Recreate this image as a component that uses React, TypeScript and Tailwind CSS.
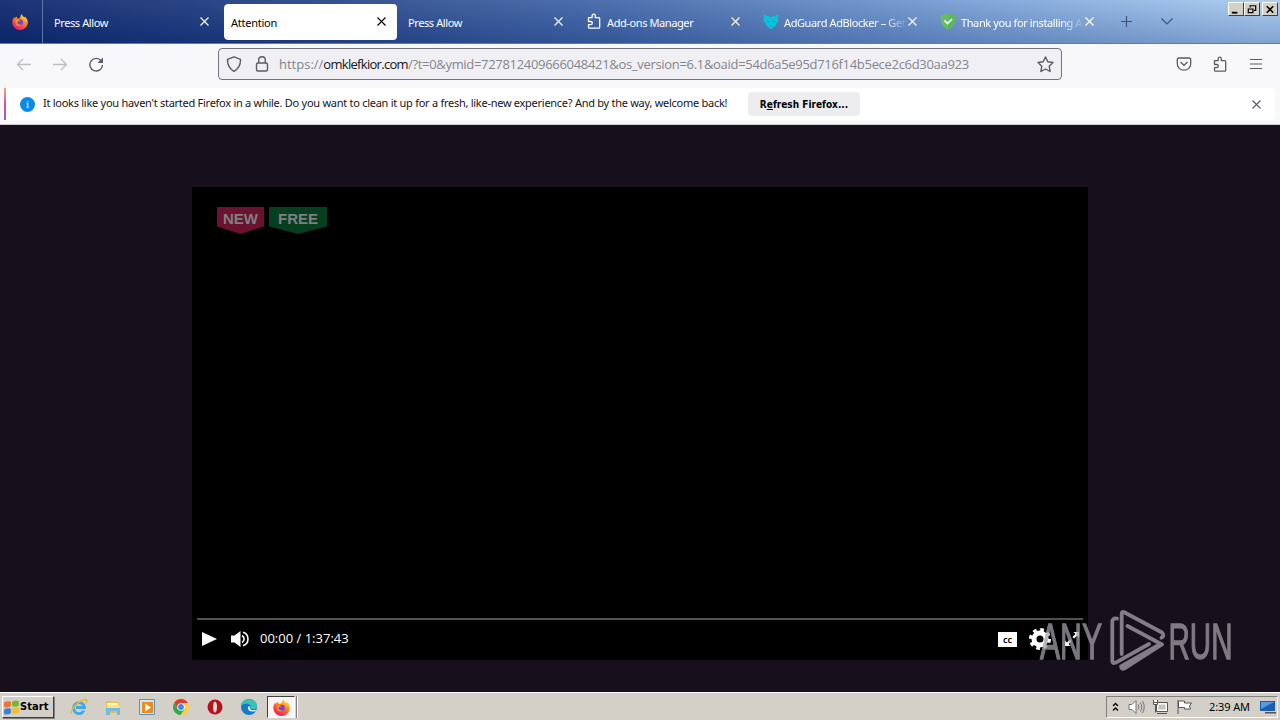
import type { ReactNode } from 'react'

const tabs = [
  { title: 'Press Allow', icon: null, active: false },
  { title: 'Attention', icon: null, active: true },
  { title: 'Press Allow', icon: null, active: false },
  { title: 'Add-ons Manager', icon: 'puzzle', active: false },
  { title: 'AdGuard AdBlocker – Get', icon: 'adguard', active: false },
  { title: 'Thank you for installing A', icon: 'shield', active: false },
]

function Puzzle({ className }: { className?: string }) {
  return (
    <svg className={className} width="16" height="16" viewBox="0 0 16 16" fill="none" stroke="currentColor" strokeWidth="1.3" strokeLinejoin="round">
      <path d="M2.500 4.700h3.600V3a1.600 1.800 0 0 1 3.200 0v1.700h3.400a1 1 0 0 1 1 1v8.600a.9.900 0 0 1-.9.900H3.500a1 1 0 0 1-1-1v-2.500h2.200a1.500 1.500 0 0 0 0-3.200H2.500z" />
    </svg>
  )
}

function Close({ className }: { className?: string }) {
  return (
    <svg className={className} width="9" height="9" viewBox="0 0 9 9" stroke="currentColor" strokeWidth="1.1">
      <path d="M.5.5l8 8M8.5.5l-8 8" />
    </svg>
  )
}

function FirefoxLogo({ size }: { size: number }) {
  return (
    <svg width={size} height={size} viewBox="0 0 16 16">
      <defs>
        <linearGradient id="fx" x1="0.8" y1="0" x2="0.2" y2="1">
          <stop offset="0" stopColor="#fff04a" />
          <stop offset="0.4" stopColor="#ff8a1e" />
          <stop offset="0.75" stopColor="#ff3750" />
          <stop offset="1" stopColor="#e31587" />
        </linearGradient>
      </defs>
      <path d="M10 0c.2 2 1.3 2.5 2.3 3.6.5-.1.5-.7.5-1C15 4.500 15.800 6.400 15.800 8.500A7.700 7.500 0 0 1 .3 8.500C.3 6 1.200 4.200 2.300 3c0 .6.1 1.200.3 1.600C3.200 3.700 4 3 5 2.600c-.1.700 0 1.500.4 2.100C7 4.600 8 4.300 8.200 3.600 8.500 2.200 9 .800 10 0z" fill="url(#fx)" />
      <circle cx="8.100" cy="8.300" r="3" fill="#7542e5" />
      <path d="M3.500 6.500c1.500-1 3.500-.8 4.600.3-1.700.1-2.100 1-3 1.300 0 2.400 2.600 3.400 4.300 2.300-1.100 1.900-5 1.700-5.900-1z" fill="#ff9a28" />
    </svg>
  )
}

function TabIcon({ name }: { name: string }) {
  if (name === 'puzzle') return <Puzzle className="-mt-0.5 text-white" />
  if (name === 'adguard')
    return (
      <svg width="16" height="16" viewBox="0 0 16 16" fill="#08c4d8">
        <path d="M.5 1L2.500.500 4 2.500 5.500 1.500 6.500 3h3l1-1.500L12 2.500 13.500.500l2 .5-.5 3 .5 3.500L13.500 9l-1 3-2 1-2.500 2.500L5.500 13l-2-1-1-3L.5 7.500 1 4z" />
        <path d="M4 7l2 1M12 7l-2 1M7 12h2" stroke="#2a8fc5" />
      </svg>
    )
  return (
    <svg width="16" height="16" viewBox="0 0 16 16">
      <path d="M8 0c2.500.1 5 .6 7.500 1.600 0 6-.8 10.400-7.500 14.200C1.300 12 .5 7.600.5 1.600 3 .6 5.500.1 8 0z" fill="#68bd63" />
      <path d="M8 0c2.500.1 5 .6 7.500 1.600 0 6-.8 10.400-7.500 14.200z" fill="#5cb85c" />
      <path d="M4.500 6.500l3 3L12 5" fill="none" stroke="#fff" strokeWidth="1.700" />
    </svg>
  )
}

function TabStrip() {
  return (
    <div className="flex h-11 border-b border-[#66799f] bg-[linear-gradient(to_bottom,rgba(255,255,255,0.08),rgba(10,36,106,0.24)),linear-gradient(99deg,#0a246a_0%,#213f82_22%,#4166a8_48%,#7098d0_72%,#a6caf0_98%)]">
      <div className="flex w-[43px] shrink-0 items-center justify-center border-r border-[#5c74a8] pr-0.5">
        <FirefoxLogo size={16} />
      </div>
      <div className="flex pl-1 pt-1">
        {tabs.map((tab, i) => (
          <div
            key={i}
            className={`flex h-9 w-[177px] items-center pl-[7px] pr-[15px] ${tab.active ? 'relative rounded bg-white text-black [clip-path:inset(0_4px_0_0_round_4px)]' : 'text-white'}`}
          >
            {tab.icon && (
              <span className="ml-px mr-[5px] shrink-0">
                <TabIcon name={tab.icon} />
              </span>
            )}
            <span
              className={`mt-0.5 flex-1 overflow-hidden whitespace-nowrap text-[11px] ${tab.active ? 'tracking-[-0.25px]' : 'tracking-[-0.4px]'} ${i > 3 ? '[mask-image:linear-gradient(to_right,black_82%,transparent)]' : ''}`}
            >
              {tab.title}
            </span>
            <Close className="-mt-px shrink-0" />
          </div>
        ))}
      </div>
      <div className="flex items-center gap-[29px] pl-3 text-[#42547c]">
        <svg width="11" height="11" viewBox="0 0 11 11" stroke="currentColor" strokeWidth="1.200">
          <path d="M5.500 0v11M0 5.500h11" />
        </svg>
        <svg width="12" height="7" viewBox="0 0 12 7" fill="none" stroke="currentColor" strokeWidth="1.200">
          <path d="M.5.500L6 6l5.500-5.500" />
        </svg>
      </div>
      <div className="ml-auto flex items-start pr-[2px] pt-[2px]">
        <WindowButton>
          <path d="M3 10.500h6" strokeWidth="2" />
        </WindowButton>
        <WindowButton>
          <path d="M5.500 5V3h6v5h-2M5 3h7M3.500 6.500h5v4h-5zM3 6.500h6" strokeWidth="1.300" />
        </WindowButton>
        <span className="w-0.5" />
        <WindowButton>
          <path d="M4 3.500l7 7M11 3.500l-7 7" strokeWidth="1.700" />
        </WindowButton>
      </div>
    </div>
  )
}

function WindowButton({ children }: { children: ReactNode }) {
  return (
    <span className="h-[14px] w-4 border border-b-[#404040] border-l-white border-r-[#404040] border-t-white bg-[#d4d0c8]">
      <svg width="14" height="12" viewBox="0 0 15 13" fill="none" stroke="#000">
        {children}
      </svg>
    </span>
  )
}

function NavBar() {
  return (
    <div className="flex h-11 items-center bg-[#f8f8fa] pb-[4px] text-[#5b5b66]">
      <div className="flex w-[218px] items-center gap-5 pl-4">
        <svg className="text-[#bdbdc3]" width="16" height="16" viewBox="0 0 16 16" fill="none" stroke="currentColor" strokeWidth="1.300">
          <path d="M15 8.500H1.500M7 3L1.500 8.500 7 14" />
        </svg>
        <svg className="text-[#bdbdc3]" width="16" height="16" viewBox="0 0 16 16" fill="none" stroke="currentColor" strokeWidth="1.300">
          <path d="M1 8.500h13.500M9 3l5.500 5.500L9 14" />
        </svg>
        <svg width="16" height="16" viewBox="0 0 16 16" fill="none" stroke="currentColor" strokeWidth="1.400">
          <path d="M13.300 5A6.300 6.300 0 1 0 14.500 9" />
          <path d="M15 1.500v5.500H9.500z" fill="currentColor" stroke="none" />
        </svg>
      </div>
      <div className="flex h-8 w-[844px] items-center rounded border border-[#73737c] bg-[#f0f0f4] px-[7px]">
        <svg width="16" height="16" viewBox="0 0 16 16" fill="none" stroke="currentColor" strokeWidth="1.400">
          <path d="M8 .8l6.500 2.500c.2 5-1 9-6.500 12-5.500-3-6.700-7-6.500-12z" strokeLinejoin="round" />
        </svg>
        <svg className="ml-3" width="16" height="16" viewBox="0 0 16 16" fill="none" stroke="currentColor" strokeWidth="1.400">
          <rect x="2.500" y="7" width="11" height="8" rx="1.500" />
          <path d="M4.700 7V4a3.300 3.300 0 0 1 6.600 0v3" />
        </svg>
        <span className="ml-[9px] mt-px flex-1 whitespace-nowrap font-['Open_Sans','Noto_Sans',sans-serif] text-[13px] tracking-[-0.31px] text-[#85858c]">
          <span className="tracking-normal">https://</span>
          <span className="tracking-[-0.7px] text-[#15141a]">omklefkior.com</span>
          /?t=0&amp;ymid=727812409666048421&amp;os_version=6.1&amp;oaid=54d6a5e95d716f14b5ece2c6d30aa923
        </span>
        <svg width="17" height="17" viewBox="0 0 17 17" fill="none" stroke="currentColor" strokeWidth="1.400" strokeLinejoin="round">
          <path d="M8.500 1l2.300 4.800 5.200.7-3.800 3.700.9 5.300-4.600-2.500-4.600 2.500.9-5.300L1 6.500l5.200-.7z" />
        </svg>
      </div>
      <div className="ml-auto flex items-center gap-5 pr-4">
        <svg width="16" height="16" viewBox="0 0 16 16" fill="none" stroke="currentColor" strokeWidth="1.300">
          <path d="M2.800 2h10.400a1.500 1.500 0 0 1 1.500 1.500V8A6.700 6.200 0 0 1 1.300 8V3.500A1.500 1.500 0 0 1 2.800 2z" />
          <path d="M4.500 6L8 9.300 11.500 6" />
        </svg>
        <Puzzle />
        <svg width="16" height="16" viewBox="0 0 16 16" stroke="currentColor" strokeWidth="1.200">
          <path d="M2 3.500h12M2 8h12M2 12.500h12" />
        </svg>
      </div>
    </div>
  )
}

function Notification() {
  return (
    <div className="h-[37px] border-b border-[#cccccf] bg-[#f8f8fa] pl-1 pr-[5px]">
      <div className="flex h-8 items-center rounded-r bg-white pr-[14px]">
        <span className="h-8 w-0.5 bg-gradient-to-b from-[#f5a27a] via-[#e0479e] to-[#9059d8]" />
        <span className="ml-[14px] flex size-[15px] items-center justify-center rounded-full bg-[#0a8be6] font-['Liberation_Serif',serif] text-[11px] text-white">
          i
        </span>
        <span className="-mt-px ml-2 w-[705px] whitespace-nowrap text-[11px] tracking-[-0.27px] text-[#15141a]">
          It looks like you haven't started Firefox in a while. Do you want to clean it up for a fresh, like-new experience? And by the way, welcome back!
        </span>
        <button className="h-6 w-28 rounded bg-[#ededf0] font-['DejaVu_Sans_Condensed','DejaVu_Sans',sans-serif] text-[10px] font-bold text-black">
          R<u>e</u>fresh Firefox...
        </button>
        <Close className="ml-auto text-[#5b5b66]" />
      </div>
    </div>
  )
}

function Badge({ label, className }: { label: string; className: string }) {
  return (
    <div
      className={`h-[27px] pt-[3px] text-center font-['Liberation_Sans',Arial,sans-serif] text-[15px] font-bold leading-[18px] text-[#7f7f7f] [clip-path:polygon(0_0,100%_0,100%_72%,50%_100%,0_72%)] ${className}`}
    >
      {label}
    </div>
  )
}

function Player() {
  return (
    <div className="mx-auto flex h-[473px] w-[896px] flex-col bg-black">
      <div className="flex gap-[5px] pl-[25px] pt-5">
        <Badge label="NEW" className="w-[47px] bg-[#6b1230]" />
        <Badge label="FREE" className="w-[58px] bg-[#063e20]" />
      </div>
      <div className="mx-[5px] mt-auto h-0.5 bg-[#50504f]" />
      <div className="flex h-10 items-center pb-0.5 pl-[10px] text-white">
        <svg width="15" height="14" viewBox="0 0 15 14" fill="currentColor">
          <path d="M0 0l15 7-15 7z" />
        </svg>
        <svg className="ml-[14px]" width="19" height="16" viewBox="0 0 19 16" fill="currentColor">
          <path d="M0 4.500h3.500L9.500 0v16l-6-4.500H0z" />
          <path d="M11 4.500a4 4 0 0 1 0 7M12 1.300a7 7 0 0 1 0 13.400" fill="none" stroke="currentColor" strokeWidth="1.600" />
        </svg>
        <span className="ml-[10px] font-['Open_Sans','Noto_Sans',sans-serif] text-[13px]">00:00 / 1:37:43</span>
        <span className="ml-auto flex h-[15px] w-[19px] items-center justify-center bg-white text-[9px] font-semibold leading-none text-black">cc</span>
        <svg className="ml-3" width="22" height="22" viewBox="0 0 22 22" fill="none" stroke="currentColor">
          <circle cx="11" cy="11" r="6" strokeWidth="5" />
          <circle cx="11" cy="11" r="9.300" strokeWidth="3.400" strokeDasharray="3.650 3.650" />
        </svg>
        <svg className="ml-[13px] mr-2" width="16" height="16" viewBox="0 0 16 16" fill="currentColor">
          <path d="M9.500 1H15v5.500l-2-2-3 3L8.500 6l3-3zM1 9.500V15h5.500l-2-2 3-3L6 8.500l-3 3z" />
        </svg>
      </div>
    </div>
  )
}

function Watermark() {
  return (
    <svg className="absolute left-[1036px] top-[606px]" width="240" height="80" viewBox="0 0 240 80">
      <g opacity="0.750" fill="#a29ea7" stroke="#a29ea7" strokeWidth="1.300" fontFamily="Liberation Sans Narrow, Liberation Sans, sans-serif" fontSize="50">
        <text x="4" y="52.500" textLength="62" lengthAdjust="spacingAndGlyphs">ANY</text>
        <text x="132.500" y="52.500" textLength="64" lengthAdjust="spacingAndGlyphs">RUN</text>
      </g>
      <g fill="none" stroke="#827d88" strokeWidth="3.800" strokeLinejoin="round" strokeLinecap="round">
        <path d="M85.700 48V8q0-3 2.500-1.700L126 26.500q3 3-.5 5.200" />
        <path d="M81 12.500q-4.700-1-4.700 4V55q0 3 3 1.800L113 38" />
        <path d="M91.500 20L126 38.500 88.500 62.300q-3 1.500-3.500-2L121 40" />
      </g>
    </svg>
  )
}

const startPanes = ['#ef7233', '#75b73b', '#3a7fd5', '#f5be2e']

function Taskbar() {
  return (
    <div className="flex h-7 items-center border-t border-white bg-[#d4d0c8] pl-0.5 pr-0.5">
      <div className="mt-px flex h-[22px] w-[52px] items-center border border-b-[#404040] border-l-white border-r-[#404040] border-t-white pl-px shadow-[1px_1px_0_#808080]">
        <span className="grid -skew-y-6 grid-cols-2 gap-px">
          {startPanes.map((color) => (
            <span key={color} className="h-[6px] w-[7px] rounded-[2px]" style={{ background: color }} />
          ))}
        </span>
        <span className="ml-px mt-px font-['DejaVu_Sans_Condensed','DejaVu_Sans',sans-serif] text-[11px] font-bold tracking-[0.1px] text-black">Start</span>
      </div>
      <div className="ml-4 mt-px flex items-center gap-4">
        <svg width="18" height="18" viewBox="0 0 18 18" fill="none">
          <path d="M14 12.500a5.500 5.500 0 1 1 .5-3H6" stroke="#3fa9e6" strokeWidth="2.800" />
          <path d="M2 16C-1 13 8 3 15 1.500c3 0 2 2 1 4" stroke="#e8b931" strokeWidth="1.500" />
        </svg>
        <svg width="18" height="18" viewBox="0 0 18 18">
          <path d="M2 3h5l1 1h7v11H2z" fill="#e5bf56" />
          <path d="M3 5h11v3H3z" fill="#fff2ad" />
          <path d="M2 10h14v7h-3v-4H6v4H2z" fill="#72b9e3" />
          <path d="M3 7h12v3H3z" fill="#f9e28b" />
        </svg>
        <svg width="18" height="18" viewBox="0 0 18 18">
          <path d="M1.500 1.500h15v15h-15z" fill="#cfe6f7" stroke="#4d96cc" />
          <path d="M4 4h11v11H4z" fill="#f08a1c" />
          <path d="M7 5.500l6 4-6 4z" fill="#fff" />
        </svg>
        <svg width="18" height="18" viewBox="0 0 18 18">
          <circle cx="9" cy="9" r="8" fill="#ffcd40" />
          <path d="M2.100 5A8 8 0 0 1 16 5H9L5.500 11z" fill="#e33b2e" />
          <path d="M2.100 5A8 8 0 0 0 8.500 17l4-6H5.500z" fill="#2da94f" />
          <circle cx="9" cy="9" r="3.800" fill="#fff" />
          <circle cx="9" cy="9" r="2.900" fill="#4086f4" />
        </svg>
        <svg width="18" height="18" viewBox="0 0 18 18">
          <circle cx="9" cy="9" r="7.500" fill="#b5121b" />
          <ellipse cx="9" cy="9" rx="2" ry="5.500" fill="#e7d9d7" />
        </svg>
        <svg width="18" height="18" viewBox="0 0 18 18">
          <circle cx="9" cy="9" r="8" fill="#1878c9" />
          <path d="M1 8C1-1 17-1 17 8c0 4-5 4-7 2 2-5-5-6-9-2z" fill="#36c2b4" />
          <path d="M8 9c-1 4 4 6 8.500 3.500 0-1-1-.5-2-.5-2 .5-5 0-4.500-2.500 0-1-1.500-2-2-.5z" fill="#dceff3" />
        </svg>
      </div>
      <div className="ml-[9px] mt-px flex h-[22px] w-[28px] items-center justify-center border border-b-white border-l-[#404040] border-r-white border-t-[#404040] bg-[#f7f6f4]">
        <FirefoxLogo size={17} />
      </div>
      <span className="ml-px mt-px h-[22px] w-0.5 border-l border-[#808080] bg-white" />
      <div className="ml-auto mt-px flex h-[22px] w-[172px] items-center border border-b-white border-l-[#808080] border-r-white border-t-[#808080] pl-[5px]">
        <svg width="8" height="10" viewBox="0 0 8 10" fill="none" stroke="#000" strokeWidth="1.400">
          <path d="M1 4l2.500-2.500L6 4M1 8.500L3.500 6 6 8.500" />
        </svg>
        <svg className="ml-2" width="17" height="16" viewBox="0 0 17 16" fill="#fff" stroke="#777">
          <path d="M1 5.500h3l4-4v13l-4-4H1z" />
          <path d="M10 5.500q2 2.500 0 5M12.500 3.500q3 4.500 0 9M14.500 2q3.500 6 0 12" fill="none" />
        </svg>
        <svg className="ml-[7px]" width="17" height="16" viewBox="0 0 17 16" fill="#fff" stroke="#555">
          <path d="M4.500 3.500h11v9h-11z" />
          <path d="M6.500 5.500h7v5h-7z" fill="#c5c3be" stroke="none" />
          <path d="M1.500 1v4.500h4V1M3.500 5.500v8M5 14.500h10M1.500 3.500h4" />
        </svg>
        <svg className="ml-[7px]" width="17" height="16" viewBox="0 0 17 16" fill="#fff" stroke="#555">
          <path d="M2 1v14" />
          <path d="M2.500 2h6v2h7l-2 3 1 3h-6V8.500h-6z" />
        </svg>
        <span className="ml-4 w-[44px] whitespace-nowrap text-[11px] tracking-[-0.1px] text-black">2:39 AM</span>
        <svg className="ml-[7px]" width="16" height="14" viewBox="0 0 16 14">
          <path d="M0 1h15v10H0z" fill="#1b5fb5" />
          <path d="M1 2h13L1 9z" fill="#5c9adf" />
          <path d="M5 12h11v1.500H5z" fill="#555" />
        </svg>
      </div>
    </div>
  )
}

export default function App() {
  return (
    <div className="relative flex h-[720px] w-[1280px] flex-col overflow-hidden bg-[#17101c] font-['Noto_Sans','Open_Sans',sans-serif]">
      <TabStrip />
      <NavBar />
      <Notification />
      <main className="flex-1 pt-[62px]">
        <Player />
      </main>
      <Taskbar />
      <Watermark />
    </div>
  )
}
